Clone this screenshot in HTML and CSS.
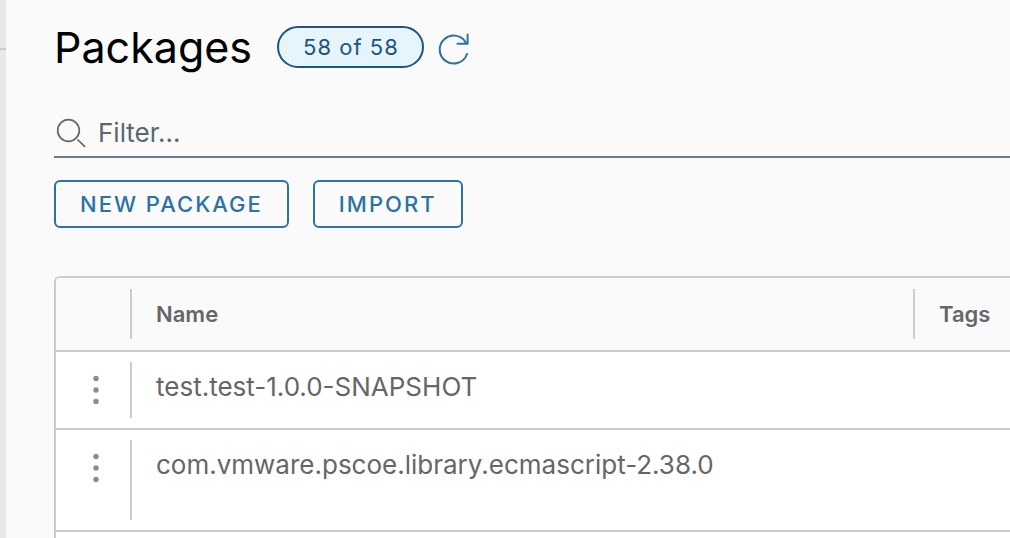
FILE: index.html
```html
<!DOCTYPE html>
<html lang="en">
<head>
<meta charset="utf-8">
<title>Packages</title>
<link rel="stylesheet" href="styles.css">
</head>
<body>
<div class="app">
  <aside class="rail"></aside>
  <main class="content">
    <header class="title-row">
      <h1 class="title">Packages</h1>
      <span class="badge">58 of 58</span>
      <button class="icon-button" type="button" aria-label="Refresh">
        <svg class="refresh" viewBox="0 0 32 32" aria-hidden="true">
          <path d="M29 21A14 14 0 1 1 28.4 10.6M29.6 1.4V10.8H19.4"/>
        </svg>
      </button>
    </header>
    <label class="filter">
      <svg class="search" viewBox="0 0 30 30" aria-hidden="true">
        <circle cx="12.5" cy="12.5" r="10.8"/>
        <path d="M22 22L28.6 28.3"/>
      </svg>
      <input class="filter-input" type="text" placeholder="Filter..." aria-label="Filter">
    </label>
    <div class="actions">
      <button class="button" type="button">NEW PACKAGE</button>
      <button class="button" type="button">IMPORT</button>
    </div>
    <div class="grid">
      <table class="table">
        <colgroup><col class="col-menu"><col><col class="col-tags"></colgroup>
        <thead>
          <tr>
            <td class="head divided"></td>
            <th class="head divided" scope="col">Name</th>
            <th class="head" scope="col">Tags</th>
          </tr>
        </thead>
        <tbody>
          <tr class="row">
            <td class="cell cell-menu divided">
              <button class="menu" type="button" aria-label="Actions for test.test-1.0.0-SNAPSHOT">
                <svg class="dots" viewBox="0 0 6 30" aria-hidden="true"><circle cx="3" cy="3.5" r="2.7"/><circle cx="3" cy="15" r="2.7"/><circle cx="3" cy="26.5" r="2.7"/></svg>
              </button>
            </td>
            <td class="cell">test.test-1.0.0-SNAPSHOT</td>
            <td class="cell"></td>
          </tr>
          <tr class="row row-tall">
            <td class="cell cell-menu divided">
              <button class="menu" type="button" aria-label="Actions for com.vmware.pscoe.library.ecmascript-2.38.0">
                <svg class="dots" viewBox="0 0 6 30" aria-hidden="true"><circle cx="3" cy="3.5" r="2.7"/><circle cx="3" cy="15" r="2.7"/><circle cx="3" cy="26.5" r="2.7"/></svg>
              </button>
            </td>
            <td class="cell">com.vmware.pscoe.library.ecmascript-2.38.0</td>
            <td class="cell"></td>
          </tr>
        </tbody>
      </table>
    </div>
  </main>
</div>
</body>
</html>
```
FILE: styles.css
```css
* { box-sizing: border-box; }
body {
  margin: 0;
  background: #fafafa;
  color: #666;
  font-family: Inter, "Liberation Sans", sans-serif;
  font-size: 26px;
}
button, input { font: inherit; }
svg { display: block; fill: none; }
.app { display: flex; height: 100vh; overflow: hidden; }
.rail {
  flex: none;
  width: 6px;
  padding-top: 48px;
  background: #e8e8e8;
}
.rail::before { content: ""; display: block; height: 2px; background: #ccc; }
.content {
  flex: 1;
  min-width: 0;
  display: flex;
  flex-direction: column;
  padding: 20px 0 0 48px;
}
.title-row { display: flex; align-items: center; height: 54px; }
.title { margin: 0; color: #000; font-size: 43px; font-weight: 400; line-height: 54px; }
.badge {
  margin-left: 25px;
  padding: 0 23px 0 24px;
  border: 2px solid #1d5480;
  border-radius: 21px;
  background: #e6f5fc;
  color: #1d5480;
  font-size: 22px;
  line-height: 38px;
  letter-spacing: 1px;
}
.icon-button { margin: 4px 0 0 14px; padding: 0; border: 0; background: none; }
.refresh { width: 32px; height: 32px; stroke: #2c72a5; stroke-width: 2; stroke-linecap: round; stroke-linejoin: round; }
.filter {
  display: flex;
  align-items: center;
  gap: 12px;
  height: 48px;
  margin-top: 36px;
  padding-left: 2px;
  border-bottom: 2px solid #6a7a87;
}
.search { flex: none; width: 30px; height: 30px; stroke: #666; stroke-width: 1.7; stroke-linecap: round; }
.filter-input { flex: 1; min-width: 0; padding: 0 0 2px; border: 0; outline: 0; background: none; color: #565656; }
.filter-input::placeholder { color: #576872; opacity: 1; }
.actions { display: flex; gap: 24px; margin-top: 22px; }
.button {
  height: 48px;
  padding: 0 24px;
  border: 2px solid #2c72a5;
  border-radius: 6px;
  background: none;
  color: #2c72a5;
  font-size: 22px;
  font-weight: 500;
  letter-spacing: 2px;
}
.grid {
  flex: 1;
  margin-top: 48px;
  border: 2px solid #ccc;
  border-width: 2px 0 0 2px;
  border-radius: 6px 0 0 0;
  background: #fff;
  overflow: hidden;
}
.table { width: 100%; table-layout: fixed; border-collapse: separate; border-spacing: 0; }
.col-menu { width: 76px; }
.col-tags { width: 95px; }
.head {
  position: relative;
  height: 74px;
  padding: 0 0 0 24px;
  border-bottom: 2px solid #ccc;
  background: #fafafa;
  font-size: 22px;
  font-weight: 600;
  text-align: left;
}
.cell {
  position: relative;
  height: 78px;
  padding: 17px 0 0 24px;
  border-bottom: 2px solid #ccc;
  line-height: 36px;
  vertical-align: top;
}
.row-tall .cell { height: 102px; }
.divided::after {
  content: "";
  position: absolute;
  top: 11px;
  right: 0;
  bottom: 11px;
  width: 2px;
  background: #ccc;
}
.cell.divided::after { top: 10px; bottom: 10px; }
.cell-menu { padding: 23px 0 0 37px; }
.menu { display: block; padding: 0; border: 0; background: none; }
.dots { width: 6px; height: 30px; fill: #8c8c8c; }
```
